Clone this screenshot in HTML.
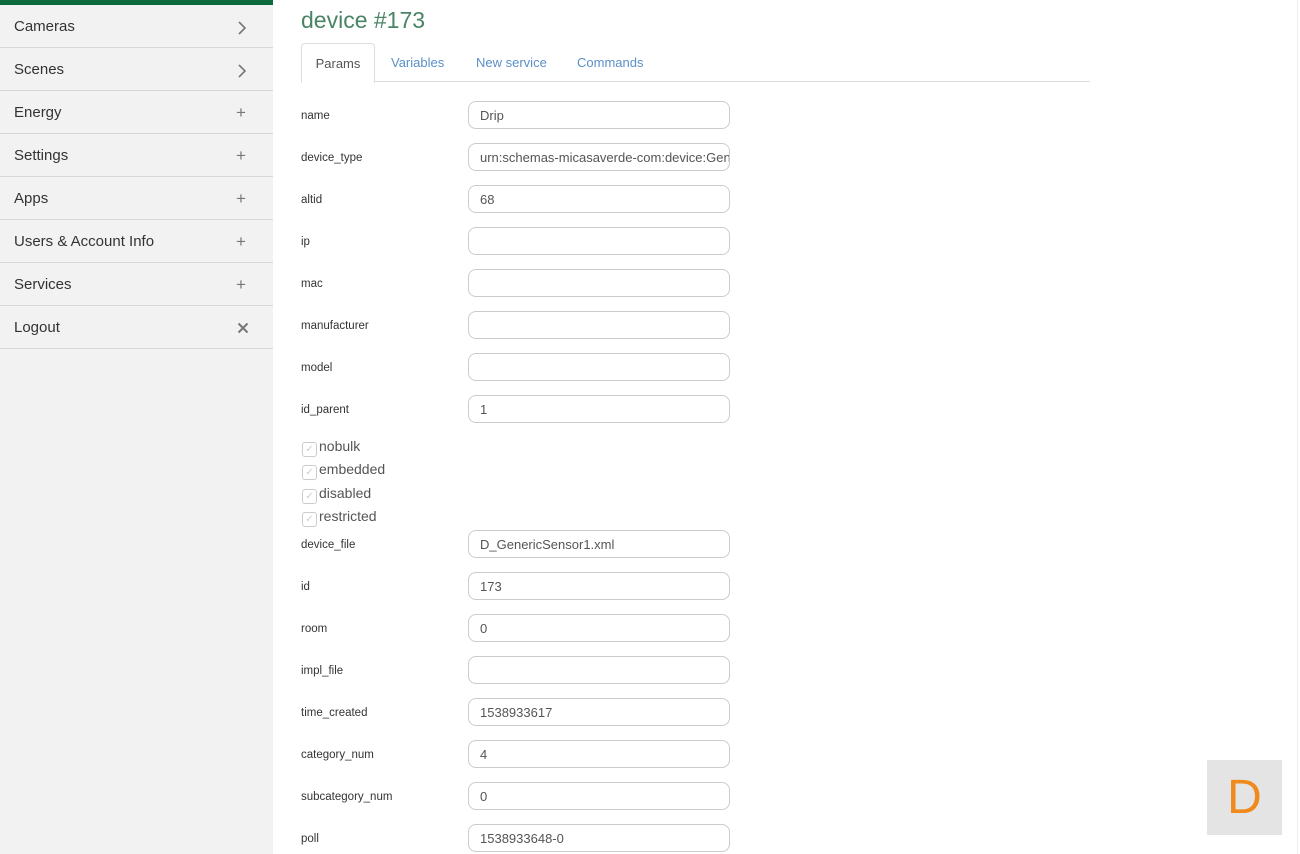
<!DOCTYPE html>
<html><head><style>
body{margin:0;width:1300px;height:854px;background:#fff;font-family:"Liberation Sans",sans-serif;position:relative;overflow:hidden}
.sb{position:absolute;left:0;top:0;width:273px;height:854px;background:#f2f2f2}
.sb .bar{height:5px;background:#0d6a3c}
.it{height:42px;border-bottom:1px solid #d6d6d6;position:relative;font-size:15px;color:#333;line-height:44px;padding-left:14px}
.it span{position:absolute;left:236px;top:0;color:#777;font-size:17px}
.it svg{position:absolute;left:237px;top:16px}
h1{position:absolute;left:301px;top:7px;margin:0;font-weight:normal;font-size:23px;color:#4a8466}
.tabs{position:absolute;left:301px;top:43px;width:789px;height:38px;border-bottom:1px solid #ddd}
.tab{position:absolute;top:0;height:38px;line-height:39px;font-size:13px;color:#5b8fc6}
.tab.a{left:0;width:72px;border:1px solid #ddd;border-bottom:1px solid #fff;border-radius:4px 4px 0 0;color:#555;text-align:center;background:#fff}
.lbl{position:absolute;left:301px;font-size:11.5px;color:#333;margin-top:2px}
.in{position:absolute;left:468px;width:249px;height:26px;border:1px solid #ccc;border-radius:8px;font-size:13px;color:#555;line-height:28px;padding-left:11px;overflow:hidden;white-space:nowrap}
.cb{position:absolute;left:302px;font-size:14px;color:#555;margin-top:1px}
.cb i{display:inline-block;width:13px;height:13px;border:1px solid #ccc;border-radius:3px;vertical-align:-1px;margin-right:2px;font-style:normal;font-size:10px;color:#ccc;line-height:13px;text-align:center}
.d{position:absolute;left:1207px;top:760px;width:75px;height:75px;background:#e4e4e4;color:#f08a1c;font-size:48px;text-align:center;line-height:75px;font-weight:300}
</style></head><body>
<div class="sb"><div class="bar"></div>
<div class="it">Cameras<svg width="10" height="14"><path d="M2 1L8 7L2 13" fill="none" stroke="#777" stroke-width="1.6"/></svg></div>
<div class="it">Scenes<svg width="10" height="14"><path d="M2 1L8 7L2 13" fill="none" stroke="#777" stroke-width="1.6"/></svg></div>
<div class="it">Energy<span>+</span></div>
<div class="it">Settings<span>+</span></div>
<div class="it">Apps<span>+</span></div>
<div class="it">Users &amp; Account Info<span>+</span></div>
<div class="it">Services<span>+</span></div>
<div class="it">Logout<svg width="12" height="12" style="top:16px"><path d="M1.5 1.5L10.5 10.5M10.5 1.5L1.5 10.5" stroke="#777" stroke-width="2"/></svg></div>
</div>
<div style="position:absolute;right:2px;top:0;width:1px;height:854px;background:#eee"></div>
<h1>device #173</h1>
<div class="tabs"><div class="tab a">Params</div><div class="tab" style="left:90px">Variables</div><div class="tab" style="left:175px">New service</div><div class="tab" style="left:276px">Commands</div></div>
<div class="lbl" style="top:108px">name</div><div class="in" style="top:101px">Drip</div>
<div class="lbl" style="top:150px">device_type</div><div class="in" style="top:143px">urn:schemas-micasaverde-com:device:GenericSensor:1</div>
<div class="lbl" style="top:192px">altid</div><div class="in" style="top:185px">68</div>
<div class="lbl" style="top:234px">ip</div><div class="in" style="top:227px"></div>
<div class="lbl" style="top:276px">mac</div><div class="in" style="top:269px"></div>
<div class="lbl" style="top:318px">manufacturer</div><div class="in" style="top:311px"></div>
<div class="lbl" style="top:360px">model</div><div class="in" style="top:353px"></div>
<div class="lbl" style="top:402px">id_parent</div><div class="in" style="top:395px">1</div>
<div class="cb" style="top:437px"><i>✓</i>nobulk</div>
<div class="cb" style="top:460px"><i>✓</i>embedded</div>
<div class="cb" style="top:484px"><i>✓</i>disabled</div>
<div class="cb" style="top:507px"><i>✓</i>restricted</div>
<div class="lbl" style="top:537px">device_file</div><div class="in" style="top:530px">D_GenericSensor1.xml</div>
<div class="lbl" style="top:579px">id</div><div class="in" style="top:572px">173</div>
<div class="lbl" style="top:621px">room</div><div class="in" style="top:614px">0</div>
<div class="lbl" style="top:663px">impl_file</div><div class="in" style="top:656px"></div>
<div class="lbl" style="top:705px">time_created</div><div class="in" style="top:698px">1538933617</div>
<div class="lbl" style="top:747px">category_num</div><div class="in" style="top:740px">4</div>
<div class="lbl" style="top:789px">subcategory_num</div><div class="in" style="top:782px">0</div>
<div class="lbl" style="top:831px">poll</div><div class="in" style="top:824px">1538933648-0</div>
<div class="d">D</div>
</body></html>
